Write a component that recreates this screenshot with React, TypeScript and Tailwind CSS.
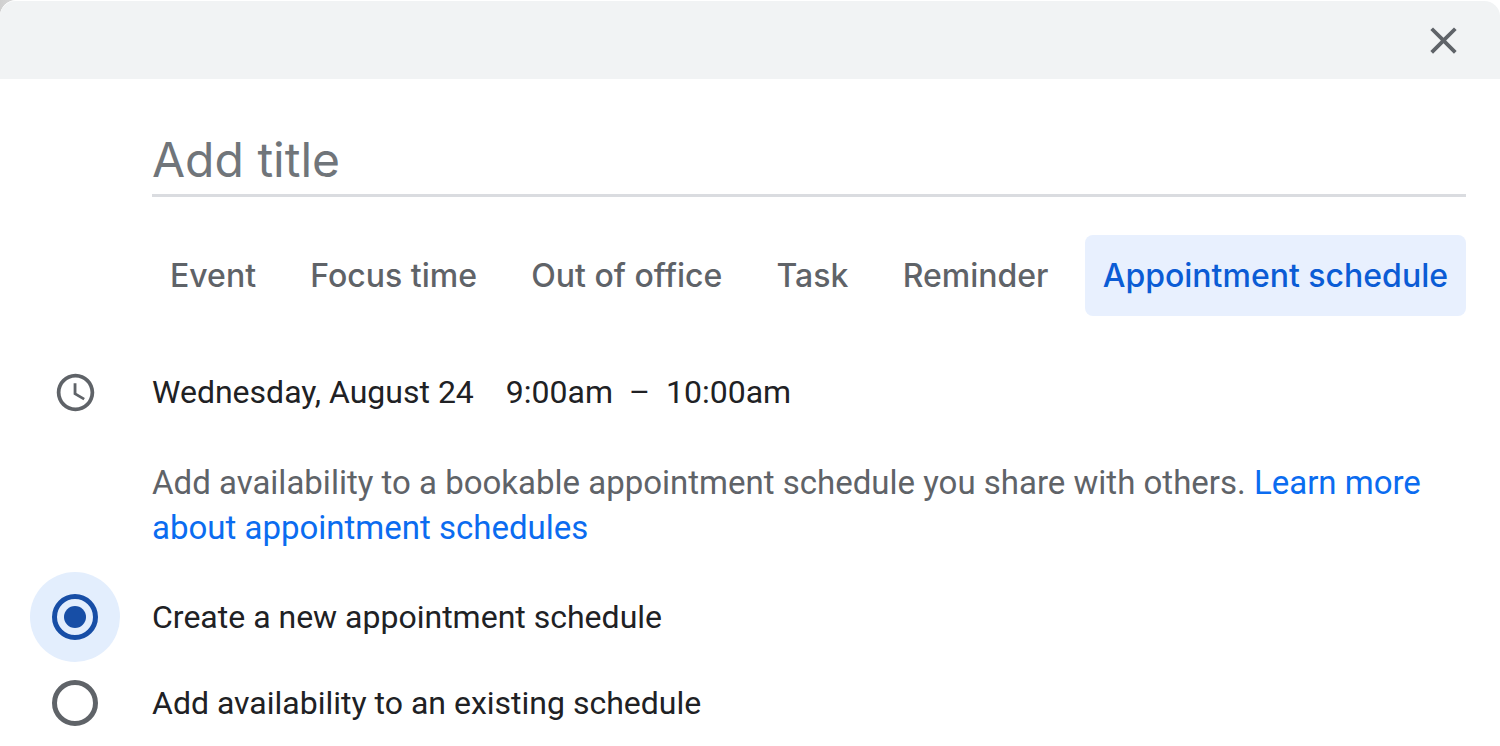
import { useState } from 'react';
import { MdAccessTime, MdClose } from 'react-icons/md';
import clsx from 'clsx';

const TABS = [
  'Event',
  'Focus time',
  'Out of office',
  'Task',
  'Reminder',
  'Appointment schedule',
];

const OPTIONS = [
  { value: 'new', label: 'Create a new appointment schedule' },
  { value: 'existing', label: 'Add availability to an existing schedule' },
];

function Tabs() {
  const [active, setActive] = useState('Appointment schedule');

  return (
    <div
      role="tablist"
      className="mt-[38px] flex justify-between font-[Inter,sans-serif] font-medium"
    >
      {TABS.map((tab) => (
        <button
          key={tab}
          type="button"
          role="tab"
          aria-selected={tab === active}
          onClick={() => setActive(tab)}
          className={clsx(
            'h-[81px] rounded-lg px-[18px] whitespace-nowrap',
            tab === active ? 'bg-[#e8f0fe] text-[#0b5cd5]' : 'text-[#5f6368]'
          )}
        >
          {tab}
        </button>
      ))}
    </div>
  );
}

function ScheduleOptions() {
  const [option, setOption] = useState('new');

  return (
    <div role="radiogroup" aria-label="Schedule type" className="mt-6">
      {OPTIONS.map(({ value, label }) => (
        <label key={value} className="flex h-[86px] items-center gap-8">
          <span className="grid size-[90px] shrink-0 place-items-center rounded-full has-checked:bg-[#e3eefd]">
            <input
              type="radio"
              name="schedule"
              value={value}
              checked={option === value}
              onChange={() => setOption(value)}
              className="size-[46px] appearance-none rounded-full border-5 border-[#5f6368] bg-clip-content p-[7px] outline-none checked:border-[#174ea6] checked:bg-[#174ea6]"
            />
          </span>
          {label}
        </label>
      ))}
    </div>
  );
}

export default function App() {
  return (
    <div className="bg-gradient-to-r from-[#cfcfcf] to-white to-5% font-[Roboto,sans-serif] text-[32px] leading-[45px] text-[#202124]">
      <div className="overflow-hidden rounded-t-2xl border-t border-white bg-white">
        <header className="flex h-[78px] items-center justify-end bg-[#f1f3f4] pr-[34px]">
          <button type="button" aria-label="Close" className="text-[#5f6368]">
            <MdClose className="size-[45px]" />
          </button>
        </header>

        <main className="pr-[34px] pl-[30px]">
          <div className="pt-[45px] pl-[122px]">
            <input
              type="text"
              aria-label="Title"
              placeholder="Add title"
              className="block h-[73px] w-full border-b-3 border-[#dadce0] font-[Inter,sans-serif] text-[48px] outline-none placeholder:text-[#70757a]"
            />
            <Tabs />
          </div>

          <div className="mt-[54px] flex items-center gap-8">
            <div className="flex w-[90px] justify-center text-[#5f6368]">
              <MdAccessTime className="size-[45px]" />
            </div>
            <div className="flex">
              <button type="button">Wednesday, August 24</button>
              <button type="button" className="ml-8">
                9:00am
              </button>
              <span className="mx-4">–</span>
              <button type="button">10:00am</button>
            </div>
          </div>

          <p className="mt-[45px] pl-[122px] text-[33px] leading-[45px] text-[#5f6368]">
            Add availability to a bookable appointment schedule you share with
            others.{' '}
            <a href="#learn-more" className="text-[#0b6cf0]">
              Learn more about appointment schedules
            </a>
          </p>

          <ScheduleOptions />
        </main>
      </div>
    </div>
  );
}
